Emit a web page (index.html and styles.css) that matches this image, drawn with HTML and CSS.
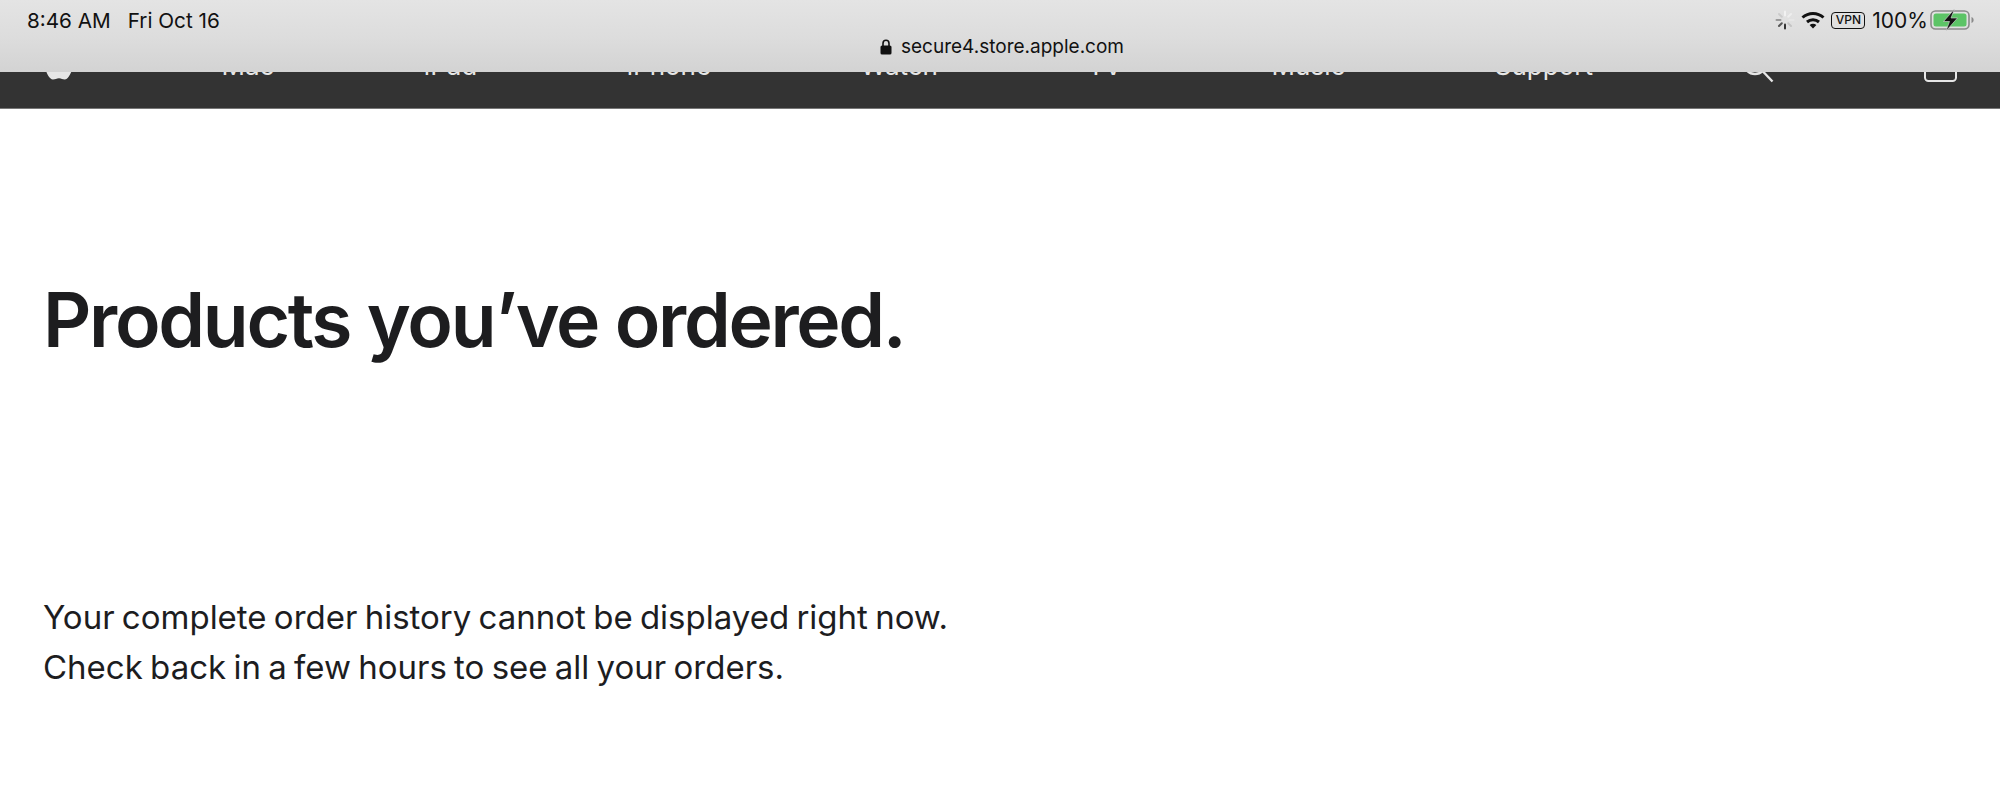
FILE: index.html
```html
<!DOCTYPE html>
<html lang="en">
<head>
    <meta charset="UTF-8">
    <meta name="viewport" content="width=device-width, initial-scale=1.0">
    <title>Products you've ordered</title>
    <link rel="stylesheet" href="styles.css">
</head>
<body>
    <div class="statusbar">
        <div class="status-row">
            <div class="status-time"><span>8:46 AM</span><span>Fri Oct 16</span></div>
            <div class="status-icons">
                <svg class="spinner" width="20" height="20" viewBox="0 0 20 20" fill="none" stroke-width="2" stroke-linecap="round">
                    <path d="M10 1.5V5.5" stroke="#f2f2f2"/>
                    <path d="M16 4L13.2 6.8" stroke="#eeeeee"/>
                    <path d="M18.5 10H14.5" stroke="#e6e6e6"/>
                    <path d="M16 16L13.2 13.2" stroke="#c4c4c4"/>
                    <path d="M10 18.5V14.5" stroke="#333333"/>
                    <path d="M4 16L6.8 13.2" stroke="#555555"/>
                    <path d="M1.5 10H5.5" stroke="#999999"/>
                    <path d="M4 4L6.8 6.8" stroke="#cccccc"/>
                </svg>
                <svg class="wifi" width="24" height="18" viewBox="0 0 24 18" fill="none" stroke="#111" stroke-width="3">
                    <path d="M1.5 6.5C7.5 1 16.5 1 22.5 6.5"/>
                    <path d="M6 11C9.5 8 14.5 8 18 11"/>
                    <path d="M12 17.5L8.6 14C10.6 12.4 13.4 12.4 15.4 14Z" fill="#111" stroke="none"/>
                </svg>
                <span class="vpn">VPN</span>
                <span class="battery-pct">100%</span>
                <svg class="battery" width="45" height="24" viewBox="0 0 45 24" fill="none">
                    <rect x="1" y="3" width="38" height="18" rx="4.5" stroke="#8a8a8a" stroke-width="1.6"/>
                    <rect x="3.5" y="5.5" width="33" height="13" rx="2.5" fill="#5cc466"/>
                    <path d="M41.5 9V15C43 14.5 43.6 13.4 43.6 12C43.6 10.6 43 9.5 41.5 9Z" fill="#8a8a8a"/>
                    <path d="M24.5 1L13.5 13.5H19.5L16 23L27.5 10H21Z" fill="#111" stroke="#dcdcdc" stroke-width="0.6"/>
                </svg>
            </div>
        </div>
        <div class="status-url">
            <svg width="12" height="16" viewBox="0 0 12 16" fill="none">
                <path d="M3 7V4.5C3 2.7 4.3 1.3 6 1.3C7.7 1.3 9 2.7 9 4.5V7" stroke="#111" stroke-width="1.6"/>
                <rect x="0.5" y="6.5" width="11" height="9" rx="1.6" fill="#111"/>
            </svg>
            <span>secure4.store.apple.com</span>
        </div>
    </div>

    <nav class="globalnav">
        <svg class="nav-apple" width="27" height="32" viewBox="0 0 27 32">
            <path d="M13.5 8C15.5 8 17.5 6.5 20 6.5C22.5 6.5 25 8 26.2 10C22.5 12 22 18 26.8 20.5C25.5 24.5 22.5 29.5 19.8 29.5C17.5 29.5 16.5 28.2 14 28.2C11.5 28.2 10.3 29.5 8 29.5C4.5 29.5 0.5 22.5 0.5 17C0.5 10.5 4.5 6.5 8.5 6.5C10.5 6.5 12 8 13.5 8Z" fill="#e6e6e6"/>
        </svg>
        <a>Mac</a>
        <a>iPad</a>
        <a>iPhone</a>
        <a>Watch</a>
        <a>TV</a>
        <a>Music</a>
        <a>Support</a>
        <svg class="nav-search" width="32" height="34" viewBox="0 0 32 34" fill="none" stroke="#e6e6e6" stroke-width="2.4">
            <circle cx="13" cy="13" r="11"/>
            <path d="M20.5 21L30.5 31.5"/>
        </svg>
        <svg class="nav-bag" width="33" height="34" viewBox="0 0 33 34" fill="none" stroke="#e6e6e6" stroke-width="2">
            <rect x="1" y="8" width="31" height="25" rx="3.5"/>
        </svg>
    </nav>

    <main class="content">
        <h1>Products you’ve ordered.</h1>
        <p>Your complete order history cannot be displayed right now.<br>Check back in a few hours to see all your orders.</p>
    </main>
</body>
</html>
```

FILE: styles.css
```css
* {
    box-sizing: border-box;
}
body {
    margin: 0;
    background-color: #fff;
    color: #1d1d1f;
    font-family: Inter, "Liberation Sans", sans-serif;
    overflow: hidden;
}
.statusbar {
    position: absolute;
    top: 0;
    left: 0;
    right: 0;
    height: 72px;
    z-index: 2;
    padding: 7px 25px 0 27px;
    color: #111;
    background: linear-gradient(180deg, #e4e4e4 0%, #dddddd 50%, #d3d3d3 100%);
}
.status-row {
    display: flex;
    justify-content: space-between;
    align-items: center;
    height: 26px;
}
.status-time {
    display: flex;
    gap: 17px;
    font-size: 20.7px;
}
.status-icons {
    display: flex;
    align-items: center;
}
.wifi {
    margin-left: 6px;
}
.vpn {
    margin-left: 6px;
    width: 34px;
    height: 17px;
    border: 1.5px solid #111;
    border-radius: 4px;
    font-size: 12px;
    font-weight: 500;
    line-height: 14px;
    text-align: center;
}
.battery-pct {
    margin-left: 7px;
    font-size: 21px;
}
.battery {
    margin-left: 2px;
}
.status-url {
    display: flex;
    justify-content: center;
    align-items: center;
    gap: 9px;
    margin-top: 2px;
    font-size: 19px;
    padding-left: 2px;
}
.globalnav {
    display: flex;
    justify-content: space-between;
    height: 109px;
    padding: 0 43px 0 45px;
    background-color: #333333;
    border-bottom: 1px solid #777;
    color: #e6e6e6;
    font-size: 26px;
}
.globalnav a {
    margin-top: 48px;
    line-height: 36px;
}
.nav-apple {
    margin-top: 50px;
}
.nav-search {
    margin-top: 50px;
}
.nav-bag {
    margin-top: 48px;
}
.content {
    padding: 0 43px;
}
h1 {
    margin: 166px 0 0;
    font-size: 75px;
    font-weight: 600;
    line-height: 90px;
    letter-spacing: -2.3px;
}
p {
    margin: 227px 0 0;
    font-size: 33px;
    line-height: 50px;
    word-spacing: -2px;
}
```
